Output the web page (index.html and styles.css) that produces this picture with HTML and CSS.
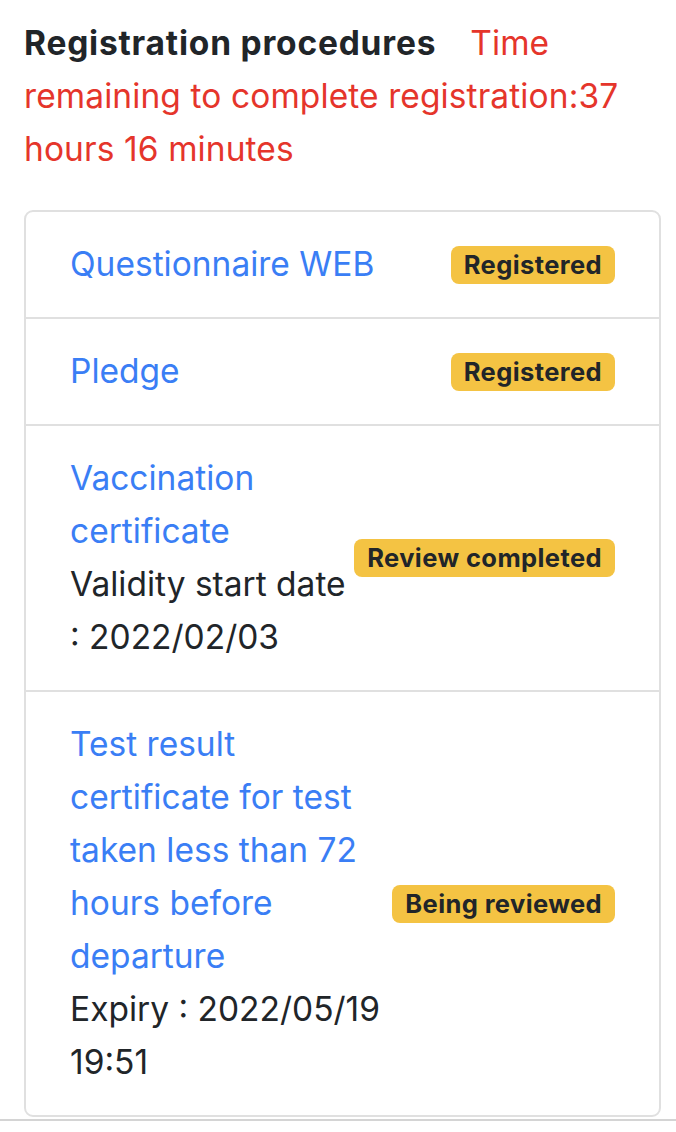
FILE: index.html
```html
<!DOCTYPE html>
<html lang="en">
<head>
<meta charset="utf-8">
<title>Registration procedures</title>
<link rel="stylesheet" href="styles.css">
</head>
<body>
<main class="page">
  <h2 class="title"><span class="title-main">Registration procedures</span><span class="title-remaining">Time remaining to complete registration:37 hours 16 minutes</span></h2>
  <ul class="card">
    <li class="row">
      <div class="row-text"><a class="row-link" href="#">Questionnaire WEB</a></div>
      <span class="badge">Registered</span>
    </li>
    <li class="row">
      <div class="row-text"><a class="row-link" href="#">Pledge</a></div>
      <span class="badge">Registered</span>
    </li>
    <li class="row">
      <div class="row-text"><a class="row-link" href="#">Vaccination certificate</a><div class="row-note">Validity start date : 2022/02/03</div></div>
      <span class="badge">Review completed</span>
    </li>
    <li class="row">
      <div class="row-text"><a class="row-link" href="#">Test result certificate for test taken less than 72 hours before departure</a><div class="row-note">Expiry : 2022/05/19 19:51</div></div>
      <span class="badge">Being reviewed</span>
    </li>
  </ul>
  <div class="page-end"></div>
</main>
</body>
</html>
```
FILE: styles.css
```css
html, body {
  margin: 0;
  padding: 0;
  background: #ffffff;
}
body {
  font-family: Inter, "Noto Sans", "Liberation Sans", sans-serif;
  font-size: 33.5px;
  line-height: 53px;
  color: #212529;
}
.page {
  padding-top: 17px;
}
.title {
  margin: 0 24px;
  font-size: 33.5px;
  line-height: 53px;
  font-weight: 400;
}
.title-main {
  font-weight: 700;
  color: #212529;
  letter-spacing: 0.8px;
  margin-right: 34px;
}
.title-remaining {
  color: #e5352b;
  letter-spacing: 0.1px;
}
.card {
  list-style: none;
  margin: 34px 15px 0 24px;
  padding: 0;
  border: 2px solid #e0e0e0;
  border-radius: 9px;
}
.row {
  display: flex;
  align-items: center;
  justify-content: space-between;
  padding: 26px 44px;
}
.row + .row {
  border-top: 2px solid #e0e0e0;
}
.row-text {
  flex: 1 1 auto;
  min-width: 0;
}
.row-link {
  color: #3a7ef5;
  text-decoration: none;
}
.row-note {
  color: #212529;
}
.badge {
  flex: 0 0 auto;
  background: #f4c343;
  color: #212529;
  font-size: 25.5px;
  line-height: 24px;
  letter-spacing: 0.4px;
  font-weight: 700;
  padding: 7px 13px;
  border-radius: 8px;
}
.page-end {
  margin-top: 2px;
  border-top: 2px solid #d4d4d4;
}
```
